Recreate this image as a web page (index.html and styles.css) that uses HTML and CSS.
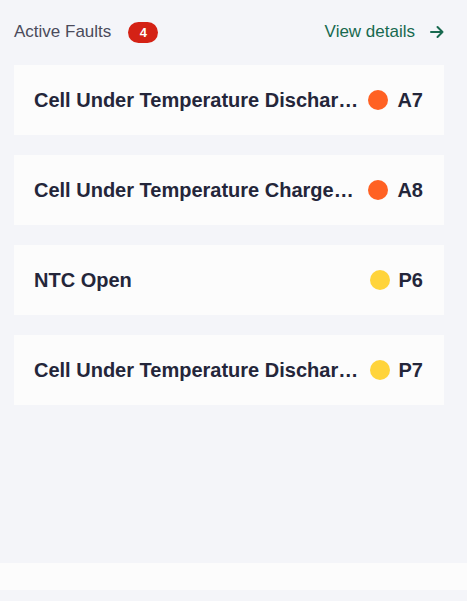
FILE: index.html
```html
<!DOCTYPE html>
<html lang="en">
<head>
    <meta charset="UTF-8">
    <meta name="viewport" content="width=device-width, initial-scale=1.0">
    <title>Active Faults</title>
    <link rel="stylesheet" href="styles.css">
</head>
<body>
    <div class="faults-panel">
        <div class="faults-header">
            <div class="faults-title">
                <span>Active Faults</span>
                <span class="count-badge">4</span>
            </div>
            <a class="view-details" href="#">
                View details
                <svg class="arrow" width="14" height="14" viewBox="0 0 14 14" fill="none">
                    <path d="M1 7H12.5M7.5 2L12.5 7L7.5 12" stroke="currentColor" stroke-width="2" stroke-linecap="round" stroke-linejoin="round"/>
                </svg>
            </a>
        </div>

        <ul class="fault-list">
            <li class="fault-card">
                <span class="fault-name">Cell Under Temperature Discharge Protection</span>
                <span class="fault-status"><span class="dot alarm"></span><span class="code">A7</span></span>
            </li>
            <li class="fault-card">
                <span class="fault-name">Cell Under Temperature Charge Alarm</span>
                <span class="fault-status"><span class="dot alarm"></span><span class="code">A8</span></span>
            </li>
            <li class="fault-card">
                <span class="fault-name">NTC Open</span>
                <span class="fault-status"><span class="dot warning"></span><span class="code">P6</span></span>
            </li>
            <li class="fault-card">
                <span class="fault-name">Cell Under Temperature Discharge Protection</span>
                <span class="fault-status"><span class="dot warning"></span><span class="code">P7</span></span>
            </li>
        </ul>
    </div>

    <div class="bottom-bar"></div>
</body>
</html>
```

FILE: styles.css
```css
/* Base */
body {
    margin: 0;
    padding: 0;
    font-family: "Liberation Sans", Arial, sans-serif;
    background-color: #f4f5f9;
    color: #24263a;
    min-height: 601px;
}
.faults-panel {
    padding: 20px 23px 0 14px;
    height: 543px;
    box-sizing: border-box;
}
/* Header */
.faults-header {
    display: flex;
    justify-content: space-between;
    align-items: center;
    height: 24px;
    margin-bottom: 21px;
}
.faults-title {
    display: flex;
    align-items: center;
    gap: 17px;
    font-size: 17px;
    color: #4b4b5b;
}
.count-badge {
    display: inline-flex;
    align-items: center;
    justify-content: center;
    width: 30px;
    height: 21px;
    border-radius: 11px;
    background-color: #d42215;
    color: #fff;
    font-size: 13px;
    font-weight: bold;
}
.view-details {
    display: flex;
    align-items: center;
    gap: 15px;
    font-size: 17px;
    color: #17694f;
    text-decoration: none;
}
.arrow {
    color: #17694f;
}
/* Cards */
.fault-list {
    list-style: none;
    margin: 0;
    padding: 0;
    display: flex;
    flex-direction: column;
    gap: 20px;
}
.fault-card {
    display: flex;
    align-items: center;
    justify-content: space-between;
    gap: 10px;
    height: 70px;
    box-sizing: border-box;
    padding: 0 21px 0 20px;
    background-color: #fcfcfc;
}
.fault-name {
    font-size: 20px;
    font-weight: bold;
    white-space: nowrap;
    overflow: hidden;
    text-overflow: ellipsis;
    min-width: 0;
}
.fault-status {
    display: flex;
    align-items: center;
    gap: 9px;
    flex-shrink: 0;
}
.dot {
    width: 20px;
    height: 20px;
    border-radius: 50%;
}
.dot.alarm {
    background-color: #ff6123;
}
.dot.warning {
    background-color: #ffd43b;
}
.code {
    font-size: 20px;
    font-weight: bold;
}
.bottom-bar {
    height: 27px;
    margin-top: 20px;
    background-color: #fcfcfc;
}
```
